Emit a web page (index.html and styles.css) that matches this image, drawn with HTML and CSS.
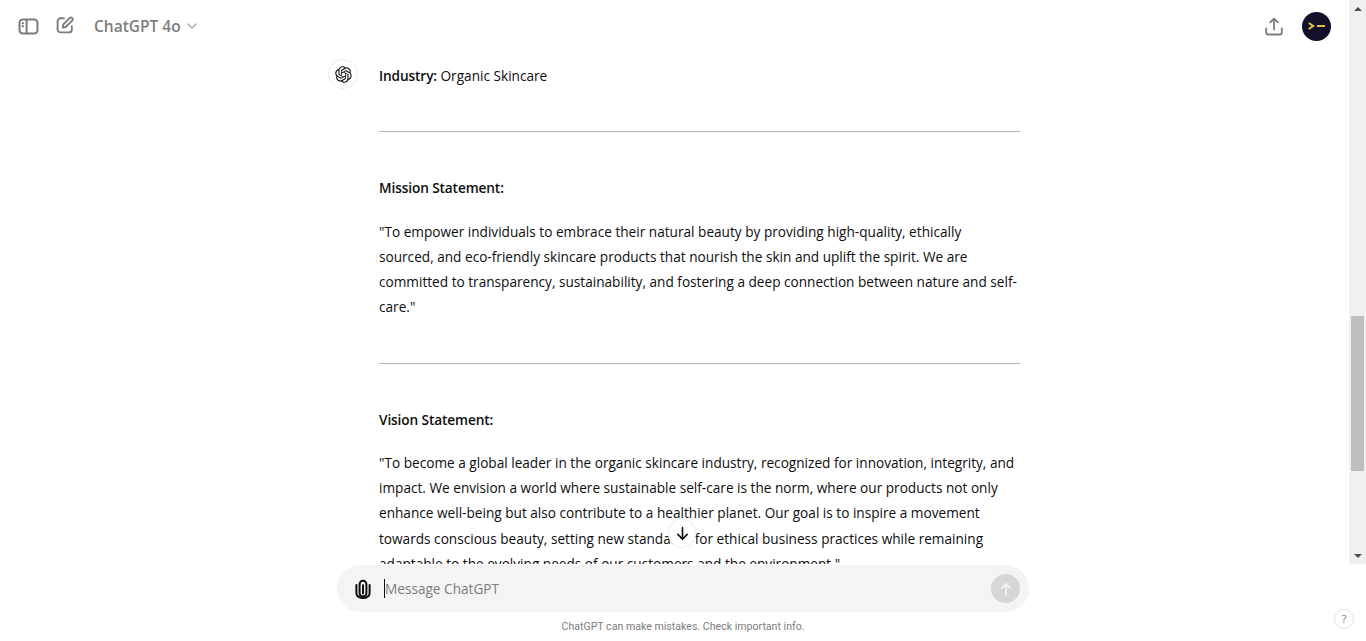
FILE: index.html
```html
<!DOCTYPE html>
<html lang="en">
<head>
<meta charset="UTF-8" />
<title>ChatGPT</title>
<link rel="stylesheet" href="styles.css">
</head>
<body>

<div class="top-area">
    <main class="chat">
        <header class="chat-header">
            <div class="header-left">
                <svg class="icon-sidebar" viewBox="0 0 22 18" fill="none" stroke="#7d7d7d" stroke-width="2.2">
                    <rect x="1.5" y="1.5" width="19" height="15" rx="3.5"/>
                    <path d="M9 1.5v15"/>
                    <path d="M4.8 5.6h.6M4.8 8.8h.6" stroke-linecap="round"/>
                </svg>
                <svg class="icon-edit" viewBox="0 0 18 18" fill="none" stroke="#7d7d7d" stroke-width="1.9" stroke-linecap="round" stroke-linejoin="round">
                    <path d="M8 2.2H4.6A3 3 0 0 0 1.6 5.2v8.2a3 3 0 0 0 3 3h8.2a3 3 0 0 0 3-3v-3.2"/>
                    <path d="M6.6 11.6l.6-3L13.6 2a1.7 1.7 0 0 1 2.4 0l.2.2a1.7 1.7 0 0 1 0 2.4L9.6 11z"/>
                </svg>
                <span class="model-name">ChatGPT 4o</span>
                <svg class="icon-chevron" viewBox="0 0 10 6" fill="none" stroke="#a3a3a3" stroke-width="1.3" stroke-linecap="round" stroke-linejoin="round">
                    <path d="M1 1l4 4 4-4"/>
                </svg>
            </div>
            <div class="header-right">
                <svg class="icon-share" viewBox="0 0 18 19" fill="none" stroke="#7d7d7d" stroke-width="1.8" stroke-linecap="round" stroke-linejoin="round">
                    <path d="M9 12.5V1.8M5.2 5.4L9 1.6l3.8 3.8"/>
                    <path d="M1.2 11.5v4a2 2 0 0 0 2 2h11.6a2 2 0 0 0 2-2v-4"/>
                </svg>
                <div class="avatar">
                    <svg viewBox="0 0 17 8" fill="none" stroke="#e8c84a" stroke-width="1.9">
                        <path d="M.8 1l4.4 3-4.4 3"/>
                        <path d="M9 4h8"/>
                    </svg>
                </div>
            </div>
        </header>

        <div class="thread">
            <div class="bot-logo">
                <svg viewBox="0 0 41 41" fill="#0d0d0d">
                    <path d="M37.5324 16.8707C37.9808 15.5241 38.1363 14.0974 37.9886 12.6859C37.8409 11.2744 37.3934 9.91076 36.676 8.68622C35.6126 6.83404 33.9882 5.3676 32.0373 4.4985C30.0864 3.62941 27.9098 3.40259 25.8215 3.85078C24.8796 2.7893 23.7219 1.94125 22.4257 1.36341C21.1295 0.785575 19.7249 0.491269 18.3058 0.500197C16.1708 0.495044 14.0893 1.16803 12.3614 2.42214C10.6335 3.67624 9.34853 5.44666 8.6917 7.47815C7.30085 7.76286 5.98686 8.3414 4.8377 9.17505C3.68854 10.0087 2.73073 11.0782 2.02839 12.312C0.956464 14.1591 0.498905 16.2988 0.721698 18.4228C0.944492 20.5467 1.83612 22.5449 3.268 24.1293C2.81966 25.4759 2.66413 26.9026 2.81182 28.3141C2.95951 29.7256 3.40701 31.0892 4.12437 32.3138C5.18791 34.1659 6.8123 35.6322 8.76321 36.5013C10.7141 37.3704 12.8907 37.5973 14.9789 37.1492C15.9208 38.2107 17.0786 39.0587 18.3747 39.6366C19.6709 40.2144 21.0755 40.5087 22.4946 40.4998C24.6307 40.5054 26.7133 39.8321 28.4418 38.5772C30.1704 37.3223 31.4556 35.5506 32.1119 33.5179C33.5027 33.2332 34.8167 32.6547 35.9659 31.821C37.115 30.9874 38.0728 29.9178 38.7752 28.684C39.8458 26.8371 40.3023 24.6979 40.0789 22.5748C39.8556 20.4517 38.9639 18.4544 37.5324 16.8707ZM22.4978 37.8849C20.7443 37.8874 19.0459 37.2733 17.6994 36.1501C17.7601 36.117 17.8666 36.0586 17.936 36.0161L25.9004 31.4156C26.1003 31.3019 26.2663 31.137 26.3813 30.9378C26.4964 30.7386 26.5563 30.5124 26.5549 30.2825V19.0542L29.9213 20.998C29.9389 21.0068 29.9541 21.0198 29.9656 21.0359C29.977 21.052 29.9842 21.0707 29.9867 21.0902V30.3889C29.9842 32.375 29.1946 34.2791 27.7909 35.6841C26.3872 37.0892 24.4838 37.8806 22.4978 37.8849ZM6.39227 31.0064C5.51397 29.4888 5.19742 27.7107 5.49804 25.9832C5.55718 26.0187 5.66048 26.0818 5.73461 26.1244L13.699 30.7248C13.8975 30.8408 14.1233 30.902 14.3532 30.902C14.583 30.902 14.8088 30.8408 15.0073 30.7248L24.731 25.1103V28.9979C24.7321 29.0177 24.7283 29.0376 24.7199 29.0556C24.7115 29.0736 24.6988 29.0893 24.6829 29.1012L16.6317 33.7497C14.9096 34.7416 12.8643 35.0097 10.9447 34.4954C9.02506 33.9811 7.38785 32.7263 6.39227 31.0064ZM4.29707 13.6194C5.17156 12.0998 6.55279 10.9364 8.19885 10.3327C8.19885 10.4013 8.19491 10.5228 8.19491 10.6071V19.808C8.19351 20.0378 8.25334 20.2638 8.36823 20.4629C8.48312 20.6619 8.64893 20.8267 8.84863 20.9404L18.5723 26.5542L15.206 28.4979C15.1894 28.5089 15.1703 28.5155 15.1505 28.5173C15.1307 28.5191 15.1107 28.516 15.0924 28.5082L7.04046 23.8557C5.32135 22.8601 4.06716 21.2235 3.55289 19.3046C3.03862 17.3858 3.30624 15.3413 4.29707 13.6194ZM31.955 20.0556L22.2312 14.4411L25.5976 12.4981C25.6142 12.4872 25.6333 12.4805 25.6531 12.4787C25.6729 12.4769 25.6928 12.4801 25.7111 12.4879L33.7631 17.1364C34.9967 17.849 36.0017 18.8982 36.6606 20.1613C37.3194 21.4244 37.6047 22.849 37.4832 24.2684C37.3617 25.6878 36.8382 27.0432 35.9743 28.1759C35.1103 29.3086 33.9415 30.1717 32.6047 30.6641C32.6047 30.5947 32.6047 30.4733 32.6047 30.3889V21.188C32.6066 20.9586 32.5474 20.7328 32.4332 20.5338C32.319 20.3348 32.154 20.1698 31.955 20.0556ZM35.3055 15.0128C35.2464 14.9765 35.1431 14.9142 35.069 14.8717L27.1045 10.2712C26.906 10.1554 26.6803 10.0943 26.4504 10.0943C26.2206 10.0943 25.9948 10.1554 25.7963 10.2712L16.0726 15.8858V11.9982C16.0715 11.9783 16.0753 11.9585 16.0837 11.9405C16.0921 11.9225 16.1048 11.9068 16.1207 11.8949L24.1719 7.25025C25.4053 6.53903 26.8158 6.19376 28.2383 6.25482C29.6608 6.31589 31.0364 6.78077 32.2044 7.59508C33.3723 8.40939 34.2842 9.53945 34.8334 10.8531C35.3826 12.1667 35.5464 13.6095 35.3055 15.0128ZM14.2424 21.9419L10.8752 19.9981C10.8576 19.9893 10.8423 19.9763 10.8309 19.9602C10.8195 19.9441 10.8122 19.9254 10.8098 19.9058V10.6071C10.8107 9.18295 11.2173 7.78848 11.9819 6.58696C12.7466 5.38544 13.8377 4.42659 15.1275 3.82264C16.4173 3.21869 17.8524 2.99464 19.2649 3.1767C20.6775 3.35876 22.0089 3.93941 23.1034 4.85067C23.0427 4.88379 22.937 4.94215 22.8668 4.98473L14.9024 9.58517C14.7025 9.69878 14.5366 9.86356 14.4215 10.0626C14.3065 10.2616 14.2466 10.4877 14.2479 10.7175L14.2424 21.9419ZM16.071 17.9991L20.4018 15.4978L24.7325 17.9975V22.9985L20.4018 25.4983L16.071 22.9985V17.9991Z"/>
                </svg>
            </div>
            <article class="message">
                <p class="first"><strong>Industry:</strong> Organic Skincare</p>
                <hr>
                <p><strong>Mission Statement:</strong></p>
                <p>"To empower individuals to embrace their natural beauty by providing high-quality, ethically sourced, and eco-friendly skincare products that nourish the skin and uplift the spirit. We are committed to transparency, sustainability, and fostering a deep connection between nature and self-care."</p>
                <hr>
                <p><strong>Vision Statement:</strong></p>
                <p>"To become a global leader in the organic skincare industry, recognized for innovation, integrity, and impact. We envision a world where sustainable self-care is the norm, where our products not only enhance well-being but also contribute to a healthier planet. Our goal is to inspire a movement towards conscious beauty, setting new standards for ethical business practices while remaining adaptable to the evolving needs of our customers and the environment."</p>
            </article>
        </div>

        <button class="scroll-down">
            <svg viewBox="0 0 14 16" fill="none" stroke="#0d0d0d" stroke-width="1.7" stroke-linecap="round" stroke-linejoin="round">
                <path d="M7 1.5v12.5M2 9l5 5 5-5"/>
            </svg>
        </button>
    </main>

    <div class="scrollbar">
        <span class="arrow-up"></span>
        <div class="track">
            <div class="thumb"></div>
        </div>
        <span class="arrow-down"></span>
    </div>
</div>

<footer class="bottom-area">
    <div class="composer">
        <svg class="icon-clip" viewBox="0 0 16 20" fill="none" stroke="#0d0d0d" stroke-width="2" stroke-linecap="round">
            <path d="M8 14.5V6.2"/>
            <path d="M4.6 14V5.2a3.4 3.4 0 0 1 6.8 0v9a3.4 3.4 0 0 1-6.8 0"/>
            <path d="M1.4 6v8.2a6.6 4.8 0 0 0 13.2 0V6"/>
        </svg>
        <div class="input-text"><span class="caret"></span>Message ChatGPT</div>
        <div class="send-btn">
            <svg viewBox="0 0 14 16" fill="none" stroke="#f4f4f4" stroke-width="2" stroke-linecap="round" stroke-linejoin="round">
                <path d="M7 14.5V2M2 7l5-5 5 5"/>
            </svg>
        </div>
    </div>
    <div class="disclaimer">ChatGPT can make mistakes. Check important info.</div>
    <div class="help-btn">?</div>
</footer>

</body>
</html>
```

FILE: styles.css
```css
html, body {
    height: 100%;
}

body {
    margin: 0;
    font-family: "Open Sans", "Noto Sans", sans-serif;
    font-size: 13.63px;
    background-color: #ffffff;
    color: #0d0d0d;
    overflow: hidden;
    position: relative;
}

.top-area {
    display: flex;
    height: 564px;
}

.chat {
    flex: 1;
    position: relative;
    overflow: hidden;
}

/* Header */
.chat-header {
    height: 52px;
    display: flex;
    align-items: center;
    justify-content: space-between;
    padding: 0 18px 0 18px;
    box-sizing: border-box;
}

.header-left,
.header-right {
    display: flex;
    align-items: center;
}

.icon-sidebar {
    width: 21px;
    height: 17px;
}

.icon-edit {
    width: 18px;
    height: 18px;
    margin-left: 17px;
    margin-bottom: 3px;
}

.model-name {
    font-size: 15.5px;
    font-weight: 600;
    color: #7d7d7d;
    margin-left: 20px;
}

.icon-chevron {
    width: 10px;
    height: 6px;
    margin-left: 6px;
    margin-bottom: 1px;
}

.icon-share {
    width: 18px;
    height: 19px;
}

.avatar {
    width: 29px;
    height: 29px;
    margin-left: 19px;
    border-radius: 50%;
    background-color: #15102a;
    display: flex;
    align-items: center;
    justify-content: center;
}

.avatar svg {
    width: 17px;
    height: 8px;
}

/* Thread */
.thread {
    display: flex;
    gap: 21px;
    padding: 7px 0 0 328px;
}

.bot-logo {
    width: 30px;
    height: 30px;
    flex: none;
    border: 1px solid #ececec;
    border-radius: 50%;
    display: flex;
    align-items: center;
    justify-content: center;
    box-sizing: border-box;
}

.bot-logo svg {
    width: 17px;
    height: 17px;
}

.message {
    width: 641px;
    line-height: 25.2px;
}

.message p {
    max-width: 638.5px;
    margin: 0 0 18.3px 0;
}

.message p.first {
    margin: 4px 0 0 0;
}

.message hr {
    border: none;
    border-top: 1px solid #b4b4b4;
    margin: 43px 0 43px 0;
}

.message strong {
    font-weight: 600;
    letter-spacing: -0.1px;
}

.scroll-down {
    position: absolute;
    left: 668px;
    bottom: 16px;
    width: 28px;
    height: 30px;
    padding: 0;
    border: 1px solid #ececec;
    border-radius: 50%;
    background-color: #ffffff;
    display: flex;
    align-items: center;
    justify-content: center;
}

.scroll-down svg {
    width: 13px;
    height: 15px;
}

/* Scrollbar */
.scrollbar {
    width: 17px;
    background-color: #f0f0f0;
    display: flex;
    flex-direction: column;
    align-items: center;
}

.arrow-up,
.arrow-down {
    width: 0;
    height: 0;
    border-left: 4px solid transparent;
    border-right: 4px solid transparent;
    flex: none;
}

.arrow-up {
    border-bottom: 4px solid #505050;
    margin-top: 7px;
}

.arrow-down {
    border-top: 4px solid #505050;
    margin-bottom: 6px;
}

.track {
    flex: 1;
    align-self: stretch;
    padding-top: 305px;
    box-sizing: border-box;
}

.thumb {
    height: 155px;
    margin: 0 2px;
    background-color: #bdbdbd;
}

/* Composer */
.bottom-area {
    display: flex;
    flex-direction: column;
    align-items: center;
    padding-right: 17px;
    padding-top: 1px;
}

.composer {
    width: 692px;
    height: 47px;
    margin-left: 17px;
    box-sizing: border-box;
    padding: 0 9px 0 18px;
    border-radius: 24px;
    background-color: #f4f4f4;
    display: flex;
    align-items: center;
}

.icon-clip {
    width: 16px;
    height: 20px;
    flex: none;
}

.input-text {
    flex: 1;
    display: flex;
    align-items: center;
    margin-left: 13px;
    color: #7d7d7d;
}

.caret {
    width: 1px;
    height: 19px;
    background-color: #0d0d0d;
}

.send-btn {
    width: 29px;
    height: 29px;
    border-radius: 50%;
    background-color: #d7d7d7;
    display: flex;
    align-items: center;
    justify-content: center;
}

.send-btn svg {
    width: 12px;
    height: 14px;
}

.disclaimer {
    margin-top: 7px;
    margin-left: 17px;
    font-family: Roboto, sans-serif;
    font-size: 10.6px;
    line-height: 16px;
    color: #7d7d7d;
}

.help-btn {
    position: absolute;
    right: 12px;
    bottom: 12px;
    width: 20px;
    height: 20px;
    box-sizing: border-box;
    border: 1px solid #e3e3e3;
    border-radius: 50%;
    font-size: 11px;
    line-height: 18px;
    text-align: center;
    color: #7d7d7d;
}
```
